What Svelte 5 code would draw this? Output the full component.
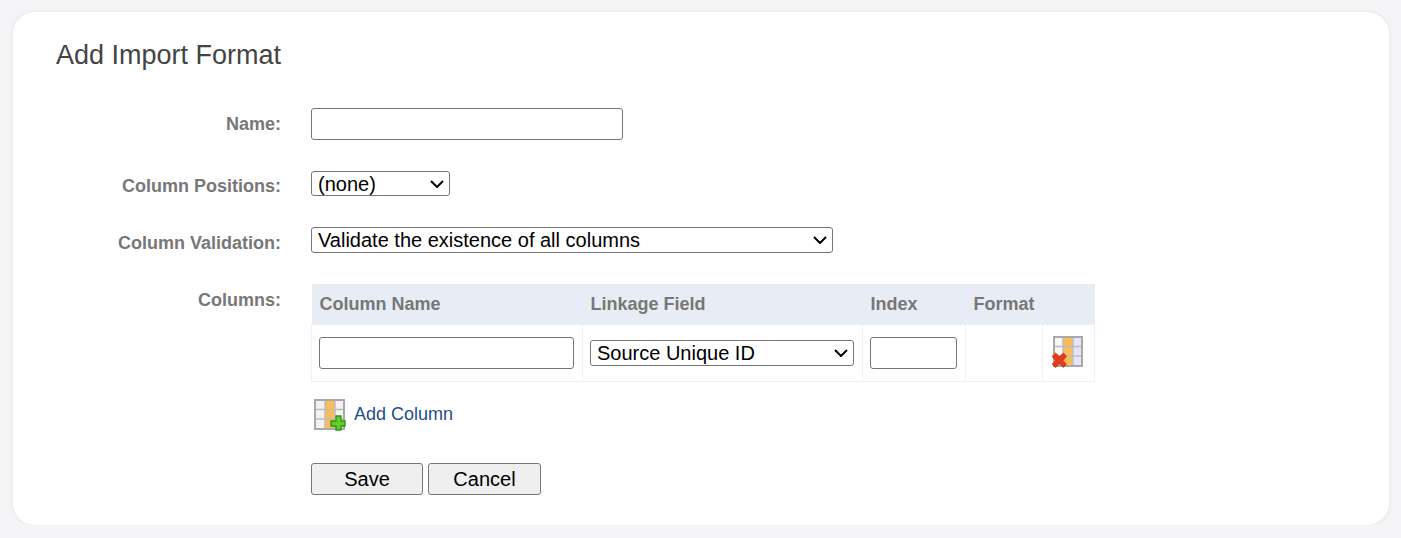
<script>
  const positions = ['(none)'];
  const validations = ['Validate the existence of all columns'];
  const linkage = ['Source Unique ID'];
</script>

<main class="card">
  <h1>Add Import Format</h1>
  <form class="form" onsubmit={(e) => e.preventDefault()}>
    <div class="label l-name">Name:</div>
    <div class="field f-name"><input class="text name" type="text" /></div>

    <div class="label l-pos">Column Positions:</div>
    <div class="field f-pos">
      <select class="sel pos">{#each positions as p}<option>{p}</option>{/each}</select>
    </div>

    <div class="label l-val">Column Validation:</div>
    <div class="field f-val">
      <select class="sel val">{#each validations as p}<option>{p}</option>{/each}</select>
    </div>

    <div class="label l-col">Columns:</div>
    <div class="field f-col">
      <table>
        <thead>
          <tr>
            <th class="c1">Column Name</th>
            <th class="c2">Linkage Field</th>
            <th class="c3">Index</th>
            <th class="c4">Format</th>
            <th class="c5"></th>
          </tr>
        </thead>
        <tbody>
          <tr>
            <td class="c1"><input class="text colname" type="text" /></td>
            <td class="c2">
              <select class="sel link">{#each linkage as p}<option>{p}</option>{/each}</select>
            </td>
            <td class="c3"><input class="text idx" type="text" /></td>
            <td class="c4"></td>
            <td class="c5">
              <svg class="ico del" width="32" height="32" viewBox="0 0 32 32" aria-hidden="true">
                <rect x="2" y="1" width="28" height="29" fill="#f6f6f6" />
                <rect x="11" y="1" width="10" height="29" fill="#f9bc58" />
                <rect x="21" y="1" width="9" height="29" fill="#e4e4fa" />
                <path d="M2 10.500h28M2 20h28M11 1v29M21 1v29" stroke="#bdbdbd" stroke-width="1.500" fill="none" />
                <rect x="2" y="1" width="28" height="29" fill="none" stroke="#a9a9a9" stroke-width="2" />
                <path d="M0 20.500l3.500-3.500 4 3.500 4-3.500 3 3.500-3.500 4 3.500 4-3 3-4-3.500-4 3.500-3.500-3 3.500-4z" fill="#e4391c" stroke="#c4401f" stroke-width="0.800" />
              </svg>
            </td>
          </tr>
        </tbody>
      </table>
      <div class="add">
        <svg class="ico" width="32" height="32" viewBox="0 0 32 32" aria-hidden="true">
          <rect x="1" y="1" width="29" height="29" fill="#f2f2f2" />
          <rect x="11" y="1" width="10" height="29" fill="#f9bc58" />
          <path d="M1 10.500h29M1 20h29M11 1v29M21 1v29" stroke="#bdbdbd" stroke-width="1.500" fill="none" />
          <rect x="1" y="1" width="29" height="29" fill="none" stroke="#a9a9a9" stroke-width="2" />
          <path d="M22 17h5v5h4v5h-4v4h-5v-4h-5v-5h5z" fill="#63cc2e" stroke="#2f9212" stroke-width="1.300" />
        </svg>
        <a href="#add" onclick={(e) => e.preventDefault()}>Add Column</a>
      </div>
      <div class="buttons">
        <button type="submit" class="b-save">Save</button>
        <button type="button" class="b-cancel">Cancel</button>
      </div>
    </div>
  </form>
</main>

<style>
  :global(body) {
    background: #f5f5f8;
    font-family: "Liberation Sans", Arial, sans-serif;
  }
  .card {
    box-sizing: border-box;
    margin: 12px 12px 0 13px;
    height: 513px;
    background: #fff;
    border-radius: 22px;
    box-shadow: 0 0 5px rgba(0, 0, 0, 0.08);
    padding: 27px 43px 0;
  }
  h1 {
    margin: 0;
    font-size: 27px;
    line-height: 32px;
    font-weight: 400;
    color: #444;
  }
  .form {
    display: grid;
    grid-template-columns: 225px 1fr;
    column-gap: 30px;
    margin-top: 37px;
  }
  .label {
    text-align: right;
    font-weight: 700;
    font-size: 18px;
    line-height: 18px;
    color: #777;
  }
  .l-name { padding-top: 7px; }
  .f-name { height: 63px; }
  .l-pos { padding-top: 6px; }
  .f-pos { height: 56px; }
  .l-val { padding-top: 7px; }
  .f-val { height: 57px; }
  .l-col { padding-top: 7px; }
  .text {
    display: block;
    box-sizing: border-box;
    height: 32px;
    background: #fff;
    border: 1px solid #767676;
    border-radius: 3px;
    padding: 0 8px;
    margin: 0;
  }
  .name { width: 312px; }
  .colname { width: 255px; }
  .idx { width: 87px; }
  .sel {
    display: block;
    appearance: none;
    font-family: "Liberation Sans", Arial, sans-serif;
    font-size: 20px;
    line-height: 24px;
    color: #000;
    background-color: #fff;
    background-image: url("data:image/svg+xml,%3Csvg xmlns='http://www.w3.org/2000/svg' width='14' height='8' viewBox='0 0 14 8'%3E%3Cpath d='M1 1l6 6 6-6' fill='none' stroke='%23000' stroke-width='2'/%3E%3C/svg%3E");
    background-repeat: no-repeat;
    background-position: right 5px center;
    box-sizing: border-box;
    border: 1px solid #767676;
    border-radius: 3px;
    padding: 0 24px 0 6px;
    margin: 0;
  }
  .pos { width: 139px; height: 25px; }
  .val { width: 522px; height: 26px; }
  .link { width: 264px; height: 26px; }
  table {
    width: 783px;
    border-collapse: collapse;
    table-layout: fixed;
  }
  th, td { box-sizing: border-box; }
  th {
    height: 40px;
    padding: 2px 0 0 8px;
    background: #e8edf5;
    text-align: left;
    font-size: 18px;
    font-weight: 700;
    color: #777;
  }
  td {
    height: 57px;
    padding: 0 0 0 7px;
    border: 1px solid #edf0f5;
    vertical-align: middle;
  }
  .c1 { width: 271px; }
  .c2 { width: 280px; }
  .c3 { width: 103px; }
  .c4 { width: 77px; }
  .c5 { width: 52px; }
  td.c5 { padding: 0 0 2px 9px; }
  .ico { display: block; }
  .add {
    display: flex;
    align-items: center;
    gap: 8px;
    margin: 17px 0 0 3px;
    height: 32px;
  }
  .add a {
    color: #1f4e8c;
    font-size: 18px;
    text-decoration: none;
  }
  .buttons {
    display: flex;
    gap: 5px;
    margin-top: 32px;
  }
  button {
    box-sizing: border-box;
    height: 32px;
    padding: 2px 0 0;
    background: #efefef;
    border: 1px solid #767676;
    border-radius: 3px;
    color: #000;
    font-family: "Liberation Sans", Arial, sans-serif;
    font-size: 20px;
  }
  .b-save { width: 112px; }
  .b-cancel { width: 113px; }
</style>
